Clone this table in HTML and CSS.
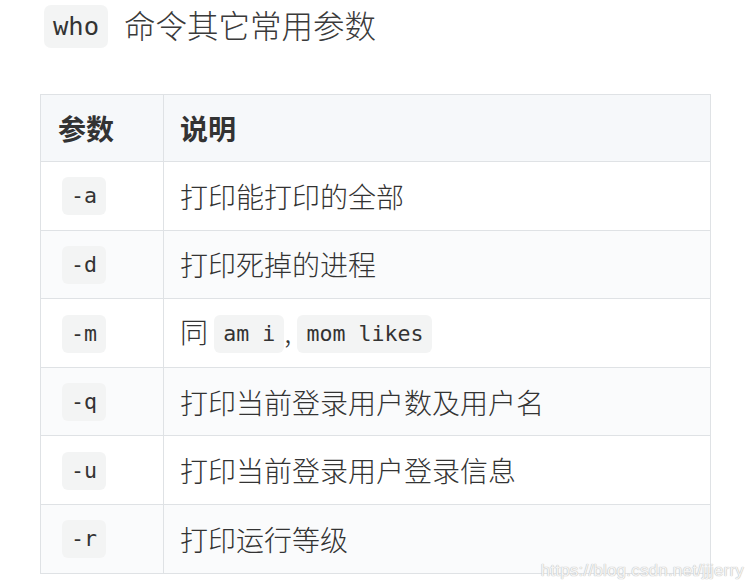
FILE: index.html
```html
<!DOCTYPE html>
<html lang="zh-CN">
<head>
<meta charset="utf-8">
<title>who 命令其它常用参数</title>
<link rel="stylesheet" href="styles.css">
</head>
<body>
<div class="page">
  <h3 class="title"><code class="tcode">who</code><span class="ttext">命令其它常用参数</span></h3>
  <table class="params">
    <thead>
      <tr><th class="c1">参数</th><th class="c2">说明</th></tr>
    </thead>
    <tbody>
      <tr><td class="c1"><code class="ic">-a</code></td><td class="c2">打印能打印的全部</td></tr>
      <tr><td class="c1"><code class="ic">-d</code></td><td class="c2">打印死掉的进程</td></tr>
      <tr><td class="c1"><code class="ic">-m</code></td><td class="c2">同 <code class="ic">am i</code>, <code class="ic">mom likes</code></td></tr>
      <tr><td class="c1"><code class="ic">-q</code></td><td class="c2">打印当前登录用户数及用户名</td></tr>
      <tr><td class="c1"><code class="ic">-u</code></td><td class="c2">打印当前登录用户登录信息</td></tr>
      <tr><td class="c1"><code class="ic">-r</code></td><td class="c2">打印运行等级</td></tr>
    </tbody>
  </table>
  <div class="watermark">https://blog.csdn.net/jjjerry</div>
</div>
</body>
</html>
```
FILE: styles.css
```css
html, body {
  margin: 0;
  padding: 0;
  background: #ffffff;
}
body {
  font-family: "Noto Sans CJK SC", "Noto Sans", sans-serif;
  color: #333333;
  width: 750px;
  height: 586px;
  overflow: hidden;
}
.page {
  position: relative;
  width: 750px;
  height: 586px;
  padding: 5px 0 0 40px;
  box-sizing: border-box;
}
.title {
  margin: 0 0 46px 4px;
  display: flex;
  align-items: center;
  height: 43px;
  font-weight: normal;
}
.tcode {
  font-family: "DejaVu Sans Mono", monospace;
  font-size: 25.5px;
  color: #333;
  background: #f3f4f4;
  border-radius: 7px;
  height: 43px;
  line-height: 43px;
  padding: 0 9px;
  box-sizing: border-box;
}
.ttext {
  font-size: 31.5px;
  font-weight: 300;
  margin-left: 16px;
  color: #3a3a3a;
  line-height: 43px;
  position: relative;
  top: -2px;
}
.params {
  border-collapse: collapse;
  width: 671px;
}
.params th, .params td {
  border: 1px solid #dfe2e5;
  text-align: left;
  padding: 0 16px;
  font-size: 28px;
  vertical-align: middle;
}
.params th {
  font-weight: bold;
  height: 66px;
  background: #f6f8fa;
  color: #333;
}
.params td {
  height: 67.6px;
  color: #333;
  font-weight: 300;
}
.params tbody tr:nth-child(even) td {
  background: #fafbfc;
}
.params .c1 {
  width: 85px;
  padding-left: 17px;
}
.params td.c1 {
  padding-left: 21px;
}
.ic {
  font-family: "DejaVu Sans Mono", monospace;
  font-size: 21.6px;
  font-weight: normal;
  background: #f3f4f4;
  border-radius: 6px;
  padding: 0 9px;
  display: inline-block;
  height: 38px;
  line-height: 38px;
  vertical-align: middle;
  color: #333;
  position: relative;
  top: -2px;
}
.watermark {
  position: absolute;
  right: 6px;
  bottom: 5px;
  font-family: "Liberation Sans", Arial, sans-serif;
  font-size: 17px;
  color: #f4f4f4;
  text-shadow: 0 0 1px #bdbdbd, 0 0 1px #bdbdbd;
  letter-spacing: 0.2px;
}
```
